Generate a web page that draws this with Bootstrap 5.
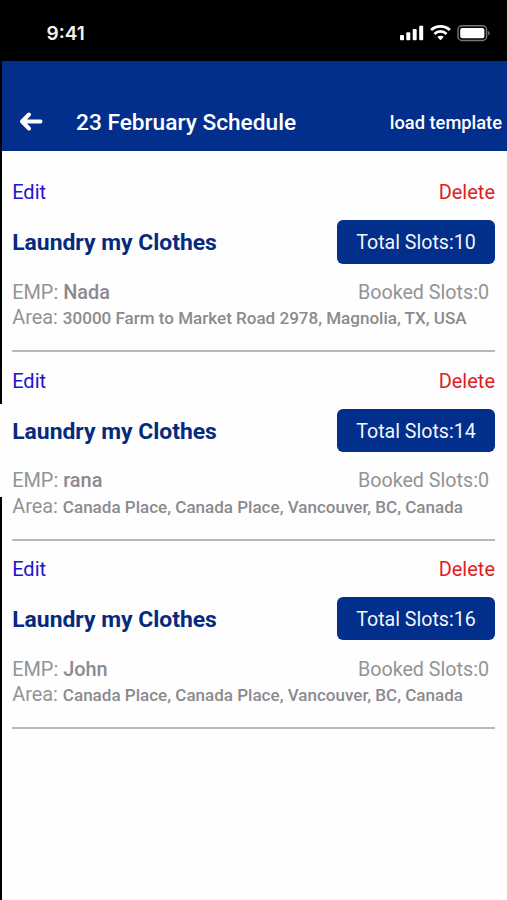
<!DOCTYPE html>
<html lang="en">
<head>
<meta charset="utf-8">
<meta name="viewport" content="width=device-width, initial-scale=1">
<title>23 February Schedule</title>
<link href="https://cdn.jsdelivr.net/npm/bootstrap@5.3.0/dist/css/bootstrap.min.css" rel="stylesheet">
<style>
  body { font-family: Roboto, "Liberation Sans", sans-serif; background: #fff; }
  .screen {
    height: 900px; padding-left: 2px;
    background: linear-gradient(#000 0 404px, #fff 404px 497px, #000 497px) 0 0 / 2px 100% no-repeat, #fefefe;
  }
  .status-bar { height: 61px; margin-left: -2px; padding: 6px 16px 0 46.5px; background: #000; }
  .clock { font: 600 19px/1 Inter, sans-serif; color: #f2f2f2; }
  .app-bar { height: 90px; padding: 0 5px 16.5px 17px; background: #022e8c; }
  .app-title { font-size: 22.7px; line-height: 25px; font-weight: 500; margin-left: 32px; }
  .load-link { font-size: 18.3px; line-height: 25px; font-weight: 500; }
  .slots-list { padding: 12.9px 12px 0 10.2px; }
  .slot-item { height: 188.33px; padding-top: 16.3px; border-bottom: 2px solid #b9b9b9; }
  .action { font-size: 20px; line-height: 24px; }
  .edit { color: #2412cb; }
  .delete { color: #e0201f; }
  .service { margin: 16px 0 16.3px; }
  .service-name { font-size: 22.9px; line-height: 28px; font-weight: 700; color: #052a7e; padding-top: 3px; }
  .total { width: 158px; height: 43.5px; padding-top: 2px; border-radius: 6px; background: #022e8c; color: #f3f6fb; font-size: 19.6px; }
  .info { font-size: 19.9px; line-height: 25.5px; color: #929496; }
  .info b { font-weight: 500; color: #898b8e; }
  .info .place { font-size: 17.05px; }
  .booked { padding-right: 6px; font-size: 19.7px; }
</style>
</head>
<body>
<div class="screen overflow-hidden">
  <div class="status-bar d-flex justify-content-between align-items-center text-white">
    <span class="clock">9:41</span>
    <div class="d-flex align-items-center">
      <svg width="92" height="20" viewBox="0 0 92 20" fill="#fff">
        <rect x="1" y="11" width="4" height="5.2" rx="1"/>
        <rect x="7.3" y="8.2" width="4" height="8" rx="1"/>
        <rect x="13.7" y="5" width="4" height="11.2" rx="1"/>
        <rect x="20.2" y="1.8" width="4" height="14.4" rx="1"/>
        <g fill="none" stroke="#fff" stroke-width="2.8">
          <path d="M32.1 6.1a13.6 13.6 0 0 1 18.8 0"/>
          <path d="M35.5 9.9a8.6 8.6 0 0 1 12 0"/>
        </g>
        <path d="M41.5 16.2l-3.2-3.2a4.6 4.6 0 0 1 6.4 0z"/>
        <rect x="59" y="1.7" width="28.6" height="14.8" rx="4" fill="none" stroke="#777" stroke-width="1.4"/>
        <rect x="61.2" y="3.9" width="24.2" height="10.4" rx="2"/>
        <path d="M89.2 6.8q3 2.3 0 4.8z" fill="#777"/>
      </svg>
    </div>
  </div>

  <header class="app-bar d-flex align-items-end text-white">
    <svg width="25" height="25" viewBox="0 0 25 25" fill="none" stroke="#fff" stroke-width="4" stroke-linecap="round" stroke-linejoin="round">
      <path d="M21.5 11.5H4M10 4.5L3 11.5l7 7"/>
    </svg>
    <h1 class="app-title mb-0">23 February Schedule</h1>
    <a class="load-link ms-auto text-white text-decoration-none" href="#">load template</a>
  </header>

  <main class="slots-list">
    <section class="slot-item">
      <div class="action d-flex justify-content-between"><a class="edit text-decoration-none" href="#">Edit</a><a class="delete text-decoration-none" href="#">Delete</a></div>
      <div class="service d-flex justify-content-between align-items-center"><h2 class="service-name mb-0">Laundry my Clothes</h2><span class="total d-flex align-items-center justify-content-center">Total Slots:10</span></div>
      <div class="info d-flex justify-content-between"><span>EMP: <b>Nada</b></span><span class="booked">Booked Slots:0</span></div>
      <div class="info text-nowrap">Area: <b class="place">30000 Farm to Market Road 2978, Magnolia, TX, USA</b></div>
    </section>
    <section class="slot-item">
      <div class="action d-flex justify-content-between"><a class="edit text-decoration-none" href="#">Edit</a><a class="delete text-decoration-none" href="#">Delete</a></div>
      <div class="service d-flex justify-content-between align-items-center"><h2 class="service-name mb-0">Laundry my Clothes</h2><span class="total d-flex align-items-center justify-content-center">Total Slots:14</span></div>
      <div class="info d-flex justify-content-between"><span>EMP: <b>rana</b></span><span class="booked">Booked Slots:0</span></div>
      <div class="info text-nowrap">Area: <b class="place">Canada Place, Canada Place, Vancouver, BC, Canada</b></div>
    </section>
    <section class="slot-item">
      <div class="action d-flex justify-content-between"><a class="edit text-decoration-none" href="#">Edit</a><a class="delete text-decoration-none" href="#">Delete</a></div>
      <div class="service d-flex justify-content-between align-items-center"><h2 class="service-name mb-0">Laundry my Clothes</h2><span class="total d-flex align-items-center justify-content-center">Total Slots:16</span></div>
      <div class="info d-flex justify-content-between"><span>EMP: <b>John</b></span><span class="booked">Booked Slots:0</span></div>
      <div class="info text-nowrap">Area: <b class="place">Canada Place, Canada Place, Vancouver, BC, Canada</b></div>
    </section>
  </main>
</div>
<script src="https://cdn.jsdelivr.net/npm/bootstrap@5.3.0/dist/js/bootstrap.bundle.min.js"></script>
</body>
</html>
